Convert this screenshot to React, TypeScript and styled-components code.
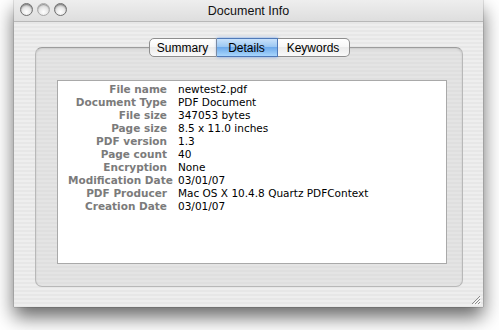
import React from "react";
import styled, { createGlobalStyle } from "styled-components";

const GlobalStyle = createGlobalStyle`
  html, body {
    margin: 0;
    padding: 0;
    background: #fff;
  }
  body {
    font-family: "Lucida Grande", "Liberation Sans", sans-serif;
  }
`;

type InfoRow = { label: string; value: string };

const rows: InfoRow[] = [
  { label: "File name", value: "newtest2.pdf" },
  { label: "Document Type", value: "PDF Document" },
  { label: "File size", value: "347053 bytes" },
  { label: "Page size", value: "8.5 x 11.0 inches" },
  { label: "PDF version", value: "1.3" },
  { label: "Page count", value: "40" },
  { label: "Encryption", value: "None" },
  { label: "Modification Date", value: "03/01/07" },
  { label: "PDF Producer", value: "Mac OS X 10.4.8 Quartz PDFContext" },
  { label: "Creation Date", value: "03/01/07" },
];

// widths measured off the segmented control
const tabs = [
  { name: "Summary", w: 68 },
  { name: "Details", w: 61 },
  { name: "Keywords", w: 72 },
];

export default function App() {
  return (
    <Page>
      <GlobalStyle />
      <Window>
        <TitleBar>
          <Lights>
            <Light />
            <Light $dim />
            <Light />
          </Lights>
          <Title>Document Info</Title>
        </TitleBar>

        <Body>
          <GroupBox>
            <TabRow>
              {tabs.map((t, i) => (
                <Tab
                  key={t.name}
                  $w={t.w}
                  $active={t.name === "Details"}
                  $first={i === 0}
                  $last={i === tabs.length - 1}
                >
                  {t.name}
                </Tab>
              ))}
            </TabRow>

            <Panel>
              <InfoGrid>
                {rows.map((r) => (
                  <React.Fragment key={r.label}>
                    <Label>{r.label}</Label>
                    <Value>{r.value}</Value>
                  </React.Fragment>
                ))}
              </InfoGrid>
            </Panel>
          </GroupBox>

          <Grip viewBox="0 0 12 12" width="12" height="12">
            <path d="M11 3 L3 11 M11 6 L6 11 M11 9 L9 11" stroke="#8c8c8c" strokeWidth="1" />
            <path d="M12 4 L4 12 M12 7 L7 12 M12 10 L10 12" stroke="#fafafa" strokeWidth="1" />
          </Grip>
        </Body>
      </Window>
    </Page>
  );
}

const Page = styled.div`
  width: 499px;
  height: 330px;
  padding: 0 16px 0 14px;
  box-sizing: border-box;
  overflow: hidden;
`;

const Window = styled.div`
  width: 469px;
  height: 307px;
  display: flex;
  flex-direction: column;
  background: repeating-linear-gradient(
    to bottom,
    #eeeeee 0px,
    #eeeeee 2px,
    #e7e7e7 2px,
    #e7e7e7 4px
  );
  box-shadow: 0 10px 18px rgba(0, 0, 0, 0.6), 0 0 1px rgba(0, 0, 0, 0.6);
`;

const TitleBar = styled.div`
  position: relative;
  height: 22px;
  flex: none;
  display: flex;
  align-items: center;
  justify-content: center;
  background: linear-gradient(to bottom, #eeeeee, #dedede);
  border-bottom: 1px solid #b8b8b8;
  box-sizing: border-box;
`;

const Lights = styled.div`
  position: absolute;
  left: 6px;
  top: 3px;
  display: flex;
  gap: 4px;
`;

const Light = styled.div<{ $dim?: boolean }>`
  width: 13px;
  height: 13px;
  border-radius: 50%;
  box-sizing: border-box;
  border: 1px solid ${(p) => (p.$dim ? "#a8a8a8" : "#707070")};
  background: radial-gradient(
    circle at 50% 72%,
    #ffffff 0%,
    #e8e8e8 45%,
    ${(p) => (p.$dim ? "#c2c2c2" : "#9a9a9a")} 100%
  );
  box-shadow: inset 0 1px 1px rgba(0, 0, 0, 0.3);
`;

const Title = styled.div`
  font-size: 12.5px;
  color: #111;
`;

const Body = styled.div`
  position: relative;
  flex: 1;
  padding: 25px 20px 20px 21px;
  display: flex;
  flex-direction: column;
`;

const GroupBox = styled.div`
  flex: 1;
  display: flex;
  flex-direction: column;
  border: 1px solid #b8b8b8;
  border-top-color: #9c9c9c;
  border-radius: 7px;
  background: repeating-linear-gradient(
    to bottom,
    #e4e4e4 0px,
    #e4e4e4 2px,
    #dfdfdf 2px,
    #dfdfdf 4px
  );
  box-shadow: inset 0 1px 2px rgba(0, 0, 0, 0.12);
  padding: 0 15px 22px 21px;
`;

const TabRow = styled.div`
  display: flex;
  justify-content: center;
  margin-top: -10px;
  margin-left: -6px;
  height: 19px;
`;

const Tab = styled.div<{ $w: number; $active: boolean; $first: boolean; $last: boolean }>`
  width: ${(p) => p.$w}px;
  height: 19px;
  box-sizing: border-box;
  display: flex;
  align-items: center;
  justify-content: center;
  font-size: 12px;
  color: #000;
  border: 1px solid ${(p) => (p.$active ? "#4f79b8" : "#8e8e8e")};
  border-left-width: ${(p) => (p.$first ? 1 : 0)}px;
  border-radius: ${(p) =>
    p.$first ? "5px 0 0 5px" : p.$last ? "0 5px 5px 0" : "0"};
  background: ${(p) =>
    p.$active
      ? "linear-gradient(to bottom, #c9e2fb 0%, #9cc8f3 45%, #6eaaeb 50%, #a9d6fc 100%)"
      : "linear-gradient(to bottom, #ffffff 0%, #f7f7f7 45%, #ebebeb 50%, #fafafa 100%)"};
  box-shadow: ${(p) => (p.$active ? "0 0 3px rgba(70,130,220,0.7)" : "none")};
`;

const Panel = styled.div`
  flex: 1;
  margin-top: 23px;
  background: #fff;
  border: 1px solid #a9a9a9;
  padding: 2px 0 0 10px;
`;

const InfoGrid = styled.div`
  display: grid;
  grid-template-columns: 99px auto;
  column-gap: 11px;
  justify-content: start;
  font-family: "Lucida Grande", "DejaVu Sans", sans-serif;
  font-size: 10.5px;
  line-height: 13px;
`;

const Label = styled.div`
  text-align: right;
  font-weight: bold;
  color: #7b7b7b;
  white-space: nowrap;
`;

const Value = styled.div`
  color: #000;
  white-space: nowrap;
`;

const Grip = styled.svg`
  position: absolute;
  right: 2px;
  bottom: 2px;
`;
